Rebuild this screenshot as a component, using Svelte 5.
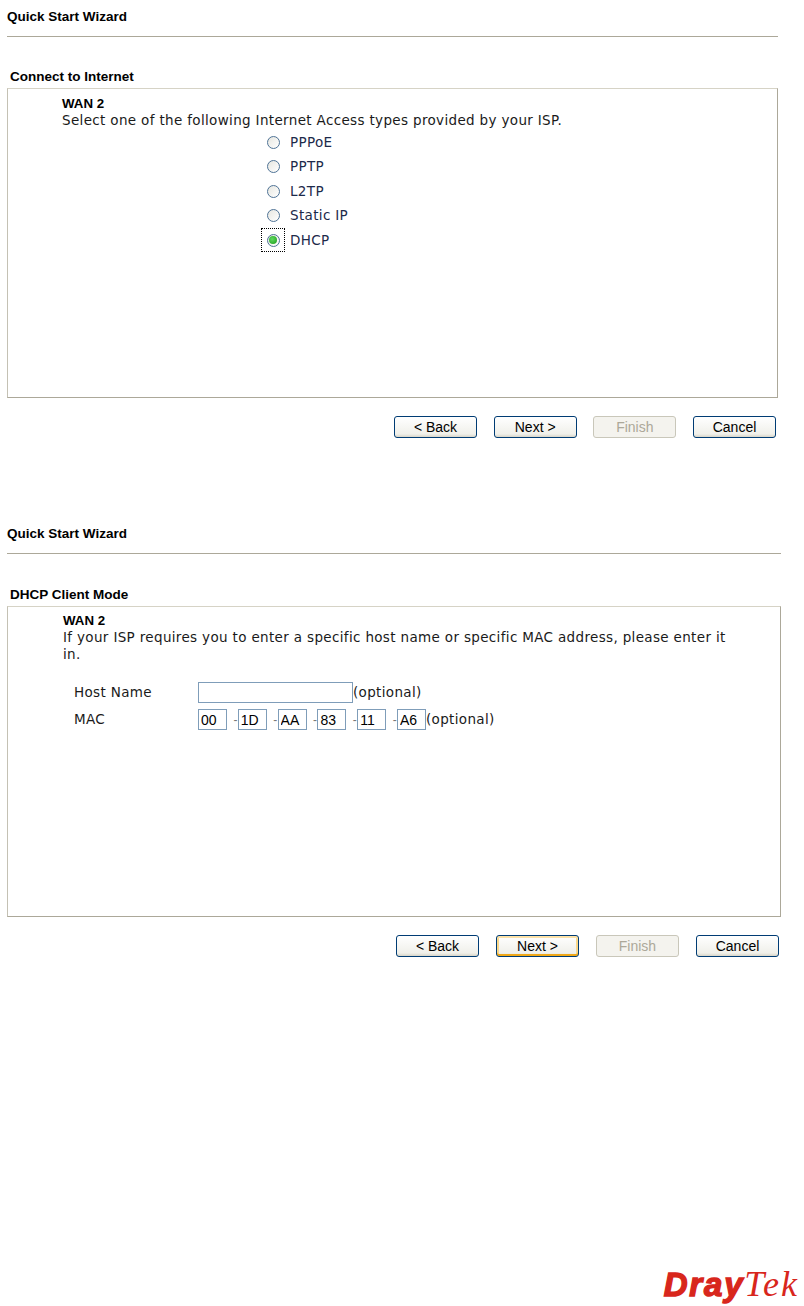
<script>
    const types = ["PPPoE", "PPTP", "L2TP", "Static IP", "DHCP"];
    const mac = ["00", "1D", "AA", "83", "11", "A6"];
    const buttons = ["< Back", "Next >", "Finish", "Cancel"];
    let selected = "DHCP";
</script>

<style>
    :global(body) {
        background: #fff;
        color: #000;
        font-family: "DejaVu Sans", Verdana, sans-serif;
    }

    .page {
        height: 1306px;
        padding-left: 7px;
        display: flex;
        flex-direction: column;
        box-sizing: border-box;
        overflow: hidden;
    }

    .wizard {
        width: 771px;
        display: flex;
        flex-direction: column;
    }

    .wizard.second {
        width: 774px;
        margin-top: 87px;
    }

    .title {
        font: bold 13.5px/16px "Liberation Sans", Arial, sans-serif;
        padding-top: 9px;
        padding-bottom: 11px;
        border-bottom: 1px solid #aca899;
    }

    .second .title {
        padding-top: 1px;
        padding-bottom: 11px;
    }

    .caption {
        font: bold 13.5px/16px "Liberation Sans", Arial, sans-serif;
        margin-top: 32px;
        padding-left: 3px;
        padding-bottom: 3px;
    }

    .second .caption {
        margin-top: 33px;
    }

    .box {
        height: 310px;
        box-sizing: border-box;
        border: 1px solid #aca899;
        border-top-color: #d6d3c6;
        border-left-color: #c4c1b4;
        padding: 6px 45px 0 54px;
        font-size: 13.5px;
        letter-spacing: 0.34px;
        line-height: 17px;
        color: #1a1a1a;
    }

    .second .box {
        height: 311px;
        padding-top: 5px;
        padding-left: 55px;
    }

    .wan {
        font: bold 13.3px/17px "Liberation Sans", Arial, sans-serif;
        letter-spacing: 0;
        color: #000;
    }

    .types {
        list-style: none;
        margin: 1px 0 0;
        padding: 0 0 0 201px;
    }

    .types li {
        height: 24.5px;
        display: flex;
        align-items: center;
        color: #1c2a4a;
    }

    .radio-wrap {
        width: 22px;
        height: 22px;
        margin-right: 6px;
        margin-left: -1px;
        display: flex;
        align-items: center;
        justify-content: center;
        box-sizing: border-box;
    }

    .radio-wrap.focused {
        outline: 1px dotted #000;
    }

    input[type="radio"] {
        appearance: none;
        width: 13px;
        height: 13px;
        margin: 0;
        border: 1px solid #4f7396;
        border-radius: 50%;
        background: linear-gradient(135deg, #e6e6e0, #fff);
        display: flex;
        align-items: center;
        justify-content: center;
    }

    input[type="radio"]:checked::after {
        content: "";
        width: 8px;
        height: 8px;
        border-radius: 50%;
        background: radial-gradient(circle at 40% 40%, #5fd85f, #1a9c1a);
    }

    .form {
        margin-top: 19px;
        padding-left: 11px;
    }

    .row {
        display: flex;
        align-items: center;
        height: 21px;
    }

    .row + .row {
        margin-top: 6px;
    }

    .row label {
        width: 124px;
    }

    .text {
        height: 21px;
        box-sizing: border-box;
        border: 1px solid #7f9db9;
        font: 14px "Liberation Sans", Arial, sans-serif;
        padding: 0 2px;
        margin: 0;
        color: #000;
    }

    .host {
        width: 155px;
    }

    .octet {
        width: 29px;
    }

    .dash {
        width: 10.8px;
        text-align: right;
        color: #777;
        font: 12px "Liberation Sans", Arial, sans-serif;
    }

    .actions {
        display: flex;
        justify-content: flex-end;
        gap: 16.67px;
        margin-top: 18px;
        padding-right: 2px;
    }

    .second .actions {
        gap: 17px;
    }

    button {
        width: 83px;
        height: 22px;
        padding: 0;
        border: 1px solid #003c74;
        border-radius: 3px;
        background: linear-gradient(#fff, #f0f0ea 85%, #d8d5c8);
        font: 14px "Liberation Sans", Arial, sans-serif;
        color: #000;
    }

    button:disabled {
        border-color: #c9c7ba;
        background: #f4f3ee;
        color: #aca899;
    }

    button.default {
        box-shadow: inset 0 -2px 0 #f0a818, inset 0 2px 0 #fce2a8, inset 2px 0 0 #fbd88a, inset -2px 0 0 #fbd88a;
    }

    .logo {
        margin-top: auto;
        margin-bottom: 3px;
        align-self: flex-end;
        padding-right: 5px;
        color: #d8261c;
        font-size: 33px;
        line-height: 36px;
        white-space: nowrap;
    }

    .dray {
        font-family: "Liberation Sans", Arial, sans-serif;
        font-weight: bold;
        font-style: italic;
        letter-spacing: 1.8px;
        -webkit-text-stroke: 1.4px #d8261c;
    }

    .tek {
        font-family: "Liberation Serif", "Times New Roman", serif;
        font-size: 36px;
        font-style: italic;
        letter-spacing: 2px;
    }
</style>

<div class="page">
    <section class="wizard">
        <div class="title">Quick Start Wizard</div>
        <div class="caption">Connect to Internet</div>
        <div class="box">
            <div class="wan">WAN 2</div>
            <div>Select one of the following Internet Access types provided by your ISP.</div>
            <ul class="types">
                {#each types as type}
                    <li>
                        <span class="radio-wrap" class:focused={selected === type}>
                            <input type="radio" name="wan" id={type} value={type} bind:group={selected} />
                        </span>
                        <label for={type}>{type}</label>
                    </li>
                {/each}
            </ul>
        </div>
        <div class="actions">
            {#each buttons as text}
                <button disabled={text === "Finish"}>{text}</button>
            {/each}
        </div>
    </section>

    <section class="wizard second">
        <div class="title">Quick Start Wizard</div>
        <div class="caption">DHCP Client Mode</div>
        <div class="box">
            <div class="wan">WAN 2</div>
            <div>If your ISP requires you to enter a specific host name or specific MAC address, please enter it in.</div>
            <div class="form">
                <div class="row">
                    <label for="host">Host Name</label>
                    <input class="text host" id="host" type="text" />
                    <span>(optional)</span>
                </div>
                <div class="row">
                    <label for="mac0">MAC</label>
                    {#each mac as part, i}
                        {#if i > 0}<span class="dash">-</span>{/if}
                        <input class="text octet" id={"mac" + i} type="text" value={part} />
                    {/each}
                    <span>(optional)</span>
                </div>
            </div>
        </div>
        <div class="actions">
            {#each buttons as text}
                <button disabled={text === "Finish"} class:default={text === "Next >"}>{text}</button>
            {/each}
        </div>
    </section>

    <div class="logo"><span class="dray">Dray</span><span class="tek">Tek</span></div>
</div>
